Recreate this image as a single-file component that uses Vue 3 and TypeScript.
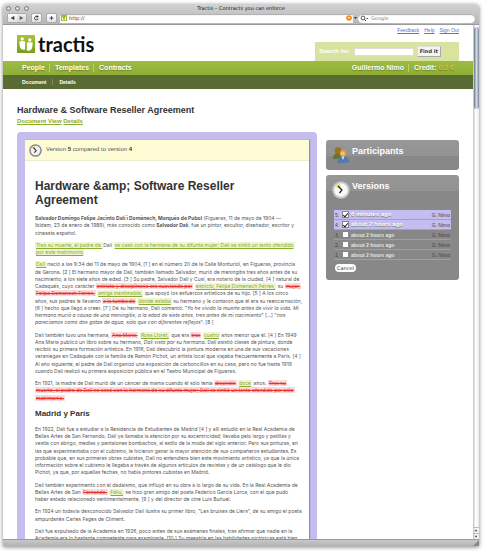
<script setup lang="ts">
import { ref } from 'vue'

interface Version {
  id: number
  when: string
  author: string
  selected: boolean
}

const versions = ref<Version[]>([
  { id: 5, when: '6 minutes ago', author: 'G. Nimo', selected: true },
  { id: 4, when: 'about 2 hours ago', author: 'G. Nimo', selected: true },
  { id: 3, when: 'about 2 hours ago', author: 'G. Nimo', selected: false },
  { id: 2, when: 'about 2 hours ago', author: 'G. Nimo', selected: false },
  { id: 1, when: 'about 2 hours ago', author: 'G. Nimo', selected: false },
])
const address = ref('http://')
const query = ref('')
const web = ref('')
const docTitle = 'Hardware &amp; Software Reseller Agreement'
</script>

<template>
  <div class="window">
    <header class="chrome">
      <div class="titlebar">
        <span class="lights"><i></i><i></i><i></i></span>
        <span class="title">Tractis – Contracts you can enforce</span>
      </div>
      <div class="toolbar">
        <div class="pair">
          <button type="button" aria-label="Back"><svg viewBox="0 0 10 8"><path d="M7 1.800V6.200L3 4z" /></svg></button>
          <button type="button" aria-label="Forward" class="dim"><svg viewBox="0 0 10 8"><path d="M3 1.800V6.200L7 4z" /></svg></button>
        </div>
        <button type="button" class="tool" aria-label="Reload">
          <svg viewBox="0 0 10 8"><path d="M6.800 4.500A2 2 0 1 1 5.600 2.300" fill="none" stroke="#333" /><path d="M5 .7L7.600 2.300L5.300 4z" /></svg>
        </button>
        <button type="button" class="tool" aria-label="Add bookmark">
          <svg viewBox="0 0 10 8"><path d="M5 2v4M3 4h4" stroke="#333" /></svg>
        </button>
        <div class="address">
          <svg class="favicon" viewBox="0 0 6 6"><rect width="6" height="6" fill="#9dbb2c" /><path d="M1.500 2.200V4.800H2.700M4.500 2.200V4.800H3.400" stroke="#fff" fill="none" /></svg>
          <input v-model="address" aria-label="Address" />
          <svg class="rss" viewBox="0 0 6 6"><circle cx="3" cy="3" r="2.800" fill="#ee8b23" /><path d="M2 2h2L3 4.200z" fill="#fff" /></svg>
        </div>
        <span class="grip"><svg viewBox="0 0 5 8"><path d="M1 3h3L2.500 5z" /></svg></span>
        <div class="google">
          <svg viewBox="0 0 9 7"><circle cx="3" cy="3" r="1.900" fill="none" stroke="#333" stroke-width=".8" /><path d="M4.300 4.300L6 6" stroke="#333" /><path d="M6 3h2.500L7.200 4.300z" /></svg>
          <input v-model="web" placeholder="Google" aria-label="Google" />
        </div>
      </div>
    </header>

    <div class="viewport">
      <div class="page">
        <div class="masthead">
          <a href="#" class="logo">
            <svg viewBox="0 0 18 18">
              <defs>
                <linearGradient id="lg" x1="0" y1="0" x2="0" y2="1"><stop offset="0" stop-color="#a8c43a" /><stop offset="1" stop-color="#76a01c" /></linearGradient>
              </defs>
              <rect width="18" height="18" fill="url(#lg)" />
              <circle cx="5.200" cy="3.900" r="1.700" fill="#fff" />
              <circle cx="12.800" cy="5" r="1.700" fill="#fff" />
              <path d="M2.300 6.500Q5 5.700 8.100 6.500V14.400Q4.500 15.300 3.200 12.700Q2.500 10 2.300 6.500z" fill="#fff" />
              <path d="M9.800 7.600Q12.600 6.800 15.700 7.600Q15.700 11 14.800 13.700Q13.400 16.300 9.800 15.400z" fill="#fff" />
            </svg>
            <span>tractis</span>
          </a>
          <div class="corner">
            <nav class="util"><a href="#">Feedback</a><a href="#">Help</a><a href="#">Sign Out</a></nav>
            <form class="search" @submit.prevent>
              <label for="q">Search for:</label>
              <input id="q" v-model="query" />
              <button type="submit">Find it</button>
            </form>
          </div>
        </div>

        <nav class="mainnav">
          <a href="#">People</a><a href="#">Templates</a><a href="#">Contracts</a>
          <span class="push"></span>
          <a href="#">Guillermo Nimo</a><span class="credit">Credit: <em>0.0 €</em></span>
        </nav>
        <nav class="subnav"><a href="#">Document</a><a href="#">Details</a></nav>

        <div class="heading">
          <h1>Hardware &amp; Software Reseller Agreement</h1>
          <p><a href="#">Document View</a> <a href="#">Details</a></p>
        </div>

        <div class="columns">
          <main class="frame">
            <div class="sheet">
              <div class="notice">
                <svg class="clock" viewBox="0 0 18 18"><circle cx="9" cy="9" r="7.700" fill="#f3f3f3" stroke="#838994" stroke-width="2" /><path d="M9 9L4 5.500A6 6 0 0 1 8 3z" fill="#ead953" /><path d="M6 5L10 9L7.500 12" fill="none" stroke="#222" stroke-width="1.400" /></svg>
                <span>Version <b>5</b> compared to version <b>4</b></span>
              </div>
              <article>
                <h2>{{ docTitle }}</h2>
                <p><b>Salvador Domingo Felipe Jacinto Dalí i Domènech, Marqués de Pubol</b> (Figueras, 11 de mayo de 1904 —<br>Ibídem, 23 de enero de 1989), más conocido como <b>Salvador Dalí</b>, fue un pintor, escultor, diseñador, escritor y<br>cineasta español.</p>
                <p><ins>Tras su muerte, el padre de </ins> Dalí <ins>se casó con la hermana de su difunta mujer; Dalí se sintió un tanto ofendido</ins><br><ins>por este matrimonio</ins></p>
                <p><ins>Dalí </ins> nació a las 9:34 del 11 de mayo de 1904, [1 ] en el número 20 de la Calle Monturiol, en Figueras, provincia<br>de Gerona. [2 ] El hermano mayor de Dalí, también llamado Salvador, murió de meningitis tres años antes de su<br>nacimiento, a los siete años de edad. [3 ] Su padre, Salvador Dalí y Cusí, era notario de la ciudad, [4 ] natural de<br>Cadaqués, cuyo carácter <del>estricto y disciplinario era suavizado por</del> <ins>estricto, Felipa Domenech Ferres,</ins> su <del>mujer,</del><br><del>Felipa Domenech Ferres,</del> <ins>amiga inestimable,</ins> que apoyó los esfuerzos artísticos de su hijo. [5 ] A los cinco<br>años, sus padres le llevaron <del>a la tumba de</del> <ins>donde estaba</ins> su hermano y le contaron que él era su reencarnación,<br>[6 ] hecho que llegó a creer. [7 ] De su hermano, Dalí comentó: "<i>Yo he vivido la muerte antes de vivir la vida. Mi</i><br><i>hermano murió a causa de una meningitis, a la edad de siete años, tres antes de mi nacimiento</i>" [...] "<i>nos</i><br><i>parecíamos como dos gotas de agua, sólo que con diferentes reflejos</i>". [8 ]</p>
                <p>Dalí también tuvo una hermana, <del>Ana María,</del> <ins>Rosa Lloret,</ins> que era <del>tres</del> <ins>cuatro</ins> años menor que él. [4 ] En 1949<br>Ana María publicó un libro sobre su hermano, <i>Dalí visto por su hermana</i>. Dalí asistió clases de pintura, donde<br>recibió su primera formación artística. En 1916, Dalí descubrió la pintura moderna en una de sus vacaciones<br>veraniegas en Cadaqués con la familia de Ramón Pichot, un artista local que viajaba frecuentemente a París. [4 ]<br>Al año siguiente, el padre de Dalí organizó una exposición de carboncillos en su casa, pero no fue hasta 1919<br>cuando Dalí realizó su primera exposición pública en el Teatro Municipal de Figueras.</p>
                <p>En 1921, la madre de Dalí murió de un cáncer de mama cuando él sólo tenía <del>dieciséis</del> <ins>doce</ins> años. <del>Tras su</del><br><del>muerte, el padre de Dalí se casó con la hermana de su difunta mujer; Dalí se sintió un tanto ofendido por este</del><br><del>matrimonio.</del></p>
                <h3>Madrid y París</h3>
                <p>En 1922, Dalí fue a estudiar a la Residencia de Estudiantes de Madrid [4 ] y allí estudió en la Real Academia de<br>Bellas Artes de San Fernando. Dalí ya llamaba la atención por su excentricidad; llevaba pelo largo y patillas y<br>vestía con abrigo, medias y pantalones bombachos, al estilo de la moda del siglo anterior. Pero sus pinturas, en<br>las que experimentaba con el cubismo, le hicieron ganar la mayor atención de sus compañeros estudiantes. Es<br>probable que, en sus primeras obras cubistas, Dalí no entendiera bien este movimiento artístico, ya que la única<br>información sobre el cubismo le llegaba a través de algunos artículos de revistas y de un catálogo que le dio<br>Pichot, ya que, por aquellas fechas, no había pintores cubistas en Madrid.</p>
                <p>Dalí también experimentó con el dadaísmo, que influyó en su obra a lo largo de su vida. En la Real Academia de<br>Bellas Artes de San <del>Fernando,</del> <ins>Feliu,</ins> se hizo gran amigo del poeta Federico García Lorca, con el que pudo<br>haber estado relacionado sentimentalmente, [9 ] y del director de cine Luis Buñuel.</p>
                <p>En 1924 un todavía desconocido Salvador Dalí ilustra su primer libro, "Les bruixes de Llers", de su amigo el poeta<br>ampurdanés Carles Fages de Climent.</p>
                <p>Dalí fue expulsado de la Academia en 1926, poco antes de sus exámenes finales, tras afirmar que nadie en la<br>Academia era lo bastante competente para examinarle. [10 ] Su maestría en las habilidades pictóricas está bien</p>
              </article>
            </div>
          </main>

          <aside>
            <section class="card">
              <header>
                <svg viewBox="0 0 18 18">
                  <path d="M1 13Q1 7 6 7Q11 7 11 13z" fill="#687632" />
                  <circle cx="6" cy="4.500" r="3.300" fill="#9a7222" />
                  <path d="M5.500 17Q5.500 10 11 10Q17 10 17 16Q12 18 5.500 17z" fill="#5579ad" />
                  <path d="M9.500 10.300L11 14L12.500 10.300z" fill="#e6edf5" />
                  <circle cx="11" cy="7.300" r="3.200" fill="#dda139" />
                  <circle cx="10.800" cy="7.600" r="2" fill="#f0c273" />
                </svg>
                <h4>Participants</h4>
              </header>
            </section>
            <section class="card">
              <header>
                <svg viewBox="0 0 18 18"><circle cx="9" cy="9" r="7.700" fill="#fbfbf6" stroke="#c4c8d0" stroke-width="2" /><path d="M9 9L3.500 5.500A6 6 0 0 1 8 2.500z" fill="#eadf74" /><path d="M6 5L10 9L7.500 12" fill="none" stroke="#222" stroke-width="1.200" /></svg>
                <h4>Versions</h4>
              </header>
              <ul>
                <li v-for="v in versions" :key="v.id" :class="{ on: v.selected }">
                  <span class="num">{{ v.id }}.</span>
                  <input :id="'v' + v.id" v-model="v.selected" type="checkbox" />
                  <label :for="'v' + v.id">{{ v.when }}</label>
                  <span class="by">{{ v.author }}</span>
                </li>
              </ul>
              <button type="button" class="cancel">Cancel</button>
            </section>
          </aside>
        </div>
      </div>
      <div class="scroll">
        <i class="thumb"></i>
        <svg viewBox="0 0 6 6"><path d="M1.500 4L3 1.500L4.500 4z" /></svg>
        <svg viewBox="0 0 6 6"><path d="M1.500 2L3 4.500L4.500 2z" /></svg>
      </div>
    </div>
    <footer class="status"><svg viewBox="0 0 6 6"><path d="M6 0V6H0z" /></svg></footer>
  </div>
</template>

<style>
body {
  background: #fff;
}
</style>

<style scoped>
* {
  box-sizing: border-box;
}
.window {
  height: calc(100vh - 9px);
  min-height: 300px;
  margin: 4px 5px 5px 3px;
  display: flex;
  flex-direction: column;
  overflow: hidden;
  border-radius: 4px 4px 0 0;
  box-shadow: 0 1px 4px rgba(0, 0, 0, 0.5);
  background: #fff;
  font-family: "Liberation Sans", Arial, sans-serif;
  font-size: 6px;
  line-height: 1.2;
  color: #555;
}
button,
input {
  font: inherit;
  margin: 0;
  padding: 0;
  border: 0;
  min-width: 0;
  outline: 0;
}
.chrome {
  flex: none;
  background: linear-gradient(#d2d2d2, #b6b6b6);
  border-bottom: 1px solid #999;
  font-family: "DejaVu Sans", sans-serif;
  font-size: 5px;
}
.titlebar {
  height: 8px;
  display: grid;
  grid-template-columns: 1fr auto 1fr;
  align-items: center;
  color: #111;
}
.lights {
  display: flex;
  gap: 4px;
  padding-left: 3px;
}
.lights i {
  width: 5px;
  height: 5px;
  border: 1px solid #777;
  border-radius: 50%;
  background: #ddd;
}
.toolbar {
  height: 12px;
  display: flex;
  align-items: center;
  padding: 0 4px;
}
.toolbar button {
  height: 8px;
  background: linear-gradient(#fff, #e2e2e2);
  display: block;
}
.toolbar svg {
  display: block;
  width: 9px;
  height: 8px;
  fill: #333;
}
.pair {
  display: flex;
  border: 1px solid #aaa;
  border-radius: 2px;
  margin-right: 4px;
}
.dim {
  opacity: 0.7;
}
.toolbar .tool {
  height: 10px;
  border: 1px solid #aaa;
  border-radius: 2px;
  margin-right: 4px;
}
.toolbar .tool + .tool {
  margin-right: 3px;
}
.address,
.google {
  display: flex;
  align-items: center;
  gap: 2px;
  height: 9px;
  background: #fff;
  box-shadow: inset 0 1px 1px #aaa;
}
.address {
  flex: 1;
  padding: 0 1px;
}
.address input,
.google input {
  flex: 1;
  height: 8px;
  background: transparent;
  color: #333;
}
.google input::placeholder {
  color: #888;
}
.toolbar .favicon,
.toolbar .rss {
  width: 6px;
  height: 6px;
}
.toolbar .grip svg {
  width: 5px;
}
.google {
  width: 117px;
  border-radius: 5px;
  padding: 0 2px;
}
.google svg {
  width: 9px;
  height: 7px;
}
.viewport {
  flex: 1;
  min-height: 0;
  display: flex;
}
.page {
  flex: 1;
  min-width: 0;
  overflow: hidden;
}
.masthead {
  display: flex;
  justify-content: space-between;
  height: 36px;
  padding: 0 14px;
}
.logo {
  display: flex;
  align-items: center;
  gap: 3px;
  height: 18px;
  margin-top: 10px;
  color: #111;
  text-decoration: none;
  font: bold 20px/18px Lato, sans-serif;
}
.logo svg {
  width: 18px;
  height: 18px;
}
.corner {
  width: 144px;
  display: flex;
  flex-direction: column;
  justify-content: space-between;
}
.util {
  display: flex;
  justify-content: flex-end;
  gap: 5px;
  padding-top: 1px;
  font-size: 5px;
  line-height: 8px;
}
.util a {
  color: #5577cc;
}
.search {
  display: flex;
  align-items: center;
  gap: 3px;
  height: 19px;
  padding: 0 4px;
  background: #d8e3a0;
}
.search label {
  color: #fff;
  font-weight: bold;
}
.search input {
  width: 60px;
  height: 8px;
  background: #fff;
  box-shadow: inset 0 0 0 1px #ddd;
}
.search button {
  height: 11px;
  padding: 0 2px;
  background: #f4f4f4;
  color: #333;
  font: bold 5px/9px "DejaVu Sans", sans-serif;
  border: 1px solid #e0e0e0;
  border-right-color: #aaa;
  border-bottom-color: #aaa;
}
.mainnav,
.subnav {
  display: flex;
  align-items: center;
  height: 14px;
  font-weight: bold;
  color: #fff;
}
.mainnav {
  padding: 0 19px;
  background: linear-gradient(#9dbb42, #8fae35);
  font-size: 7px;
  text-shadow: 0 1px 1px rgba(0, 0, 0, 0.3);
}
.subnav {
  padding: 0 19px;
  background: #596b33;
  font-size: 5px;
}
.mainnav a,
.subnav a {
  color: #fff;
  text-decoration: none;
}
.mainnav a + a,
.credit {
  margin-left: 4px;
  padding-left: 5px;
  border-left: 1px solid #b9d069;
}
.subnav a + a {
  margin-left: 6px;
  padding-left: 6px;
  border-left: 1px solid #7e8e5a;
}
.push {
  flex: 1;
}
.credit em {
  font-style: normal;
  color: #e9b92e;
}
.heading {
  padding: 15px 14px 6px;
}
.heading h1 {
  margin: 0;
  font-size: 9px;
  line-height: 12px;
  color: #333;
}
.heading p {
  margin: 0;
  line-height: 10px;
  font-weight: bold;
}
.heading a {
  color: #8aab2b;
}
.columns {
  display: grid;
  grid-template-columns: minmax(0, 300fr) minmax(0, 133fr);
  gap: 9px;
  align-items: start;
  padding: 0 14px;
}
.frame {
  padding: 8px 8px 20px;
  background: #c4bdee;
  border-radius: 4px 4px 0 0;
}
.sheet {
  background: #fff;
  box-shadow: 1px 0 1px #8f89b5;
}
.notice {
  display: flex;
  align-items: center;
  gap: 4px;
  height: 21px;
  padding: 0 4px;
  background: #fdfcd4;
  border-bottom: 1px solid #eeeccb;
}
.notice b {
  color: #333;
}
.clock {
  width: 13px;
  height: 13px;
}
article {
  padding: 18px 9px 0 10px;
  font: 5px/1.45 Inter, "Liberation Sans", sans-serif;
}
article h2,
article h3 {
  font-family: "Liberation Sans", sans-serif;
  color: #333;
}
article h2 {
  max-width: 220px;
  margin: 0 0 8px;
  font-size: 12px;
  line-height: 14px;
}
article h3 {
  margin: 7px 0;
  font-size: 8px;
  line-height: 10px;
}
article p {
  margin: 0 0 5px;
  white-space: nowrap;
}
ins {
  color: #8aac2c;
  background: #edf5d2;
  padding: 0 1px;
}
del {
  color: #e8342d;
  background: #fadadb;
  padding: 0 1px;
}
aside {
  display: grid;
  gap: 5px;
  padding-top: 8px;
}
.card {
  padding: 6px 8px;
  border-radius: 3px;
  background: linear-gradient(#979797 0, #939393 16px, #888 16px, #888);
}
.card + .card {
  padding-bottom: 8px;
}
.card header {
  display: flex;
  gap: 2px;
}
.card header svg {
  width: 18px;
  height: 18px;
  margin-left: -2px;
}
h4 {
  margin: 0;
  font-size: 9px;
  line-height: 11px;
  color: #fff;
}
ul {
  list-style: none;
  margin: 11px 0 4px;
  padding: 0;
}
li {
  display: flex;
  align-items: center;
  height: 10px;
  padding: 0 1px;
  font-size: 5px;
  color: #444;
  border-bottom: 1px solid #a0a0a0;
}
li.on {
  background: #c4bdf0;
  border-color: #a49ecb;
}
.num {
  width: 8px;
}
li input {
  appearance: none;
  width: 5px;
  height: 5px;
  margin-right: 3px;
  background: #fff;
  display: grid;
  place-items: center;
}
li input:checked {
  box-shadow: 0 0 0 1px #888;
}
li input:checked::after {
  content: "";
  width: 2px;
  height: 4px;
  border: solid #222;
  border-width: 0 1px 1px 0;
  rotate: 40deg;
}
li label {
  flex: 1;
  color: #fff;
  font-weight: bold;
}
li:not(.on) label {
  color: #e4e4e4;
}
li.on label {
  font-size: 6px;
  text-shadow: 0 1px 1px #777;
}
.cancel {
  display: block;
  height: 8px;
  margin-left: 1px;
  padding: 0 2px;
  border-radius: 4px;
  background: #fff;
  color: #333;
  font: 5px/8px "DejaVu Sans", sans-serif;
}
.scroll {
  width: 6px;
  display: flex;
  flex-direction: column;
  background: linear-gradient(90deg, #bbb, #fff 40%, #eee);
}
.thumb {
  height: 82px;
  margin: 2px 0 auto 1px;
  border-radius: 3px;
  background: linear-gradient(90deg, #687789, #d5dce6 50%, #7c899a);
}
.scroll svg {
  height: 6px;
  border-top: 1px solid #bbb;
  fill: #333;
}
.status {
  flex: none;
  height: 7px;
  border-top: 1px solid #999;
  background: linear-gradient(#c8c8c8, #b4b4b4);
  display: flex;
  justify-content: flex-end;
}
.status svg {
  width: 6px;
  height: 6px;
  fill: #888;
}
</style>
